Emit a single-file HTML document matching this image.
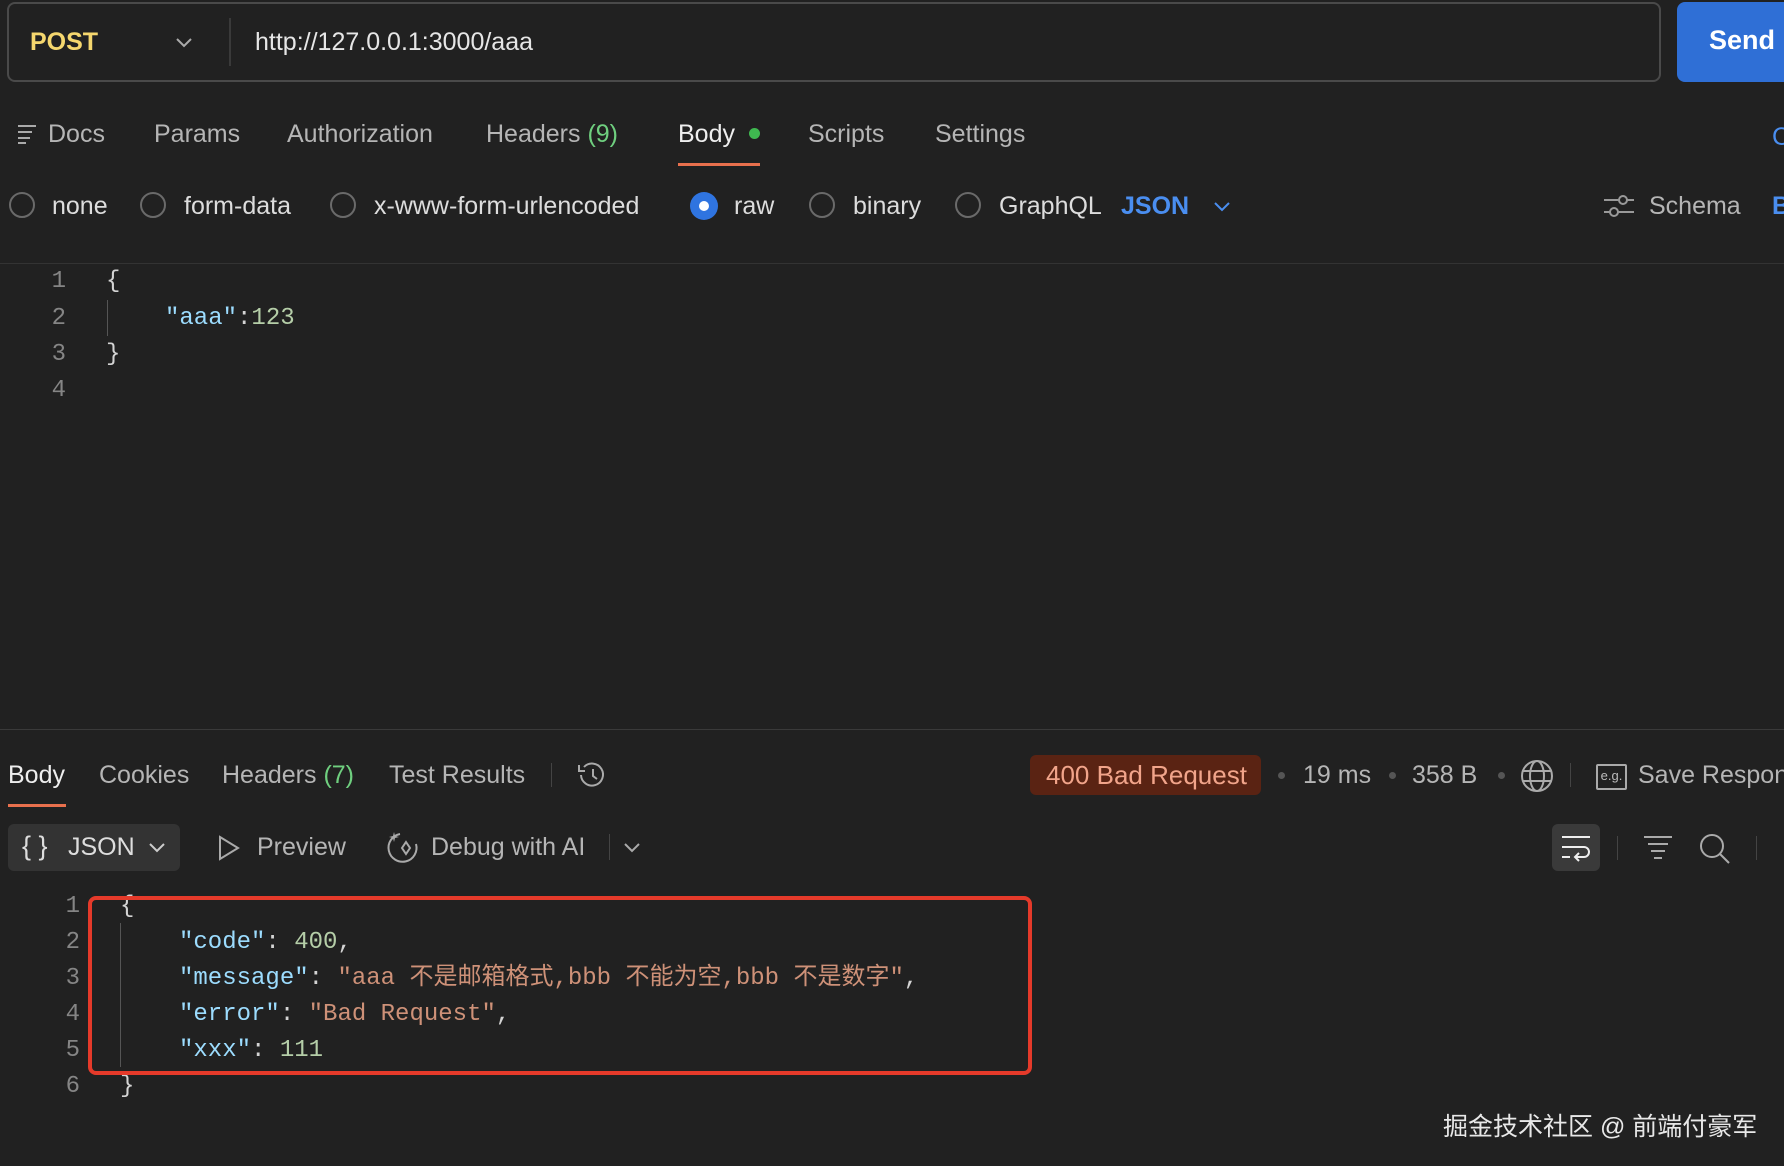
<!DOCTYPE html>
<html><head><meta charset="utf-8"><style>
*{margin:0;padding:0;box-sizing:border-box}
body{width:1784px;height:1166px;background:#212121;overflow:hidden;position:relative;font-family:"Liberation Sans","Noto Sans CJK SC",sans-serif;color:#b5b5b5}
.a{position:absolute;white-space:nowrap}
.t{font-size:25px;line-height:28px}
.m{font-family:"Liberation Mono","Noto Sans CJK SC",monospace;font-size:24px;line-height:28px}
.r{position:absolute;width:26px;height:26px;border:2px solid #6a6a6a;border-radius:50%}
.k{color:#9cdcfe}.s{color:#ce9178}.n{color:#b5cea8}.w{color:#d4d4d4}
.ln{color:#858585;text-align:right;width:30px}
</style></head><body>
<div class="a" style="left:7px;top:2px;width:1654px;height:80px;border:2px solid #4a4a4a;border-radius:8px"></div>
<div class="a t" style="left:30px;top:28px;color:#f5d76e;font-weight:bold">POST</div>
<svg class="a" style="left:174px;top:35px" width="20" height="14"><path d="M3 4l7 7 7-7" stroke="#aaa" stroke-width="2" fill="none"/></svg>
<div class="a" style="left:229px;top:18px;width:2px;height:48px;background:#3a3a3a"></div>
<div class="a t" style="left:255px;top:28px;color:#e6e6e6">http://127.0.0.1:3000/aaa</div>
<div class="a" style="left:1677px;top:2px;width:120px;height:80px;background:#2f6fd6;border-radius:8px"></div>
<div class="a" style="left:1709px;top:25px;font-size:27px;font-weight:bold;color:#fff">Send</div>

<svg class="a" style="left:17px;top:124px" width="22" height="20"><path d="M1 2h18M1 8h14M1 14h12M1 19h8" stroke="#aaa" stroke-width="2"/></svg>
<div class="a t" style="left:48px;top:120px">Docs</div>
<div class="a t" style="left:154px;top:120px">Params</div>
<div class="a t" style="left:287px;top:120px">Authorization</div>
<div class="a t" style="left:486px;top:120px">Headers <span style="color:#6fcf7f">(9)</span></div>
<div class="a t" style="left:678px;top:120px;color:#eee">Body</div>
<div class="a" style="left:749px;top:128px;width:11px;height:11px;border-radius:50%;background:#3fb950"></div>
<div class="a" style="left:678px;top:163px;width:82px;height:3px;background:#e8704d"></div>
<div class="a t" style="left:808px;top:120px">Scripts</div>
<div class="a t" style="left:935px;top:120px">Settings</div>
<div class="a t" style="left:1772px;top:123px;color:#4a8ef0">C</div>

<div class="r" style="left:9px;top:192px"></div><div class="a t" style="left:52px;top:192px;color:#ddd">none</div>
<div class="r" style="left:140px;top:192px"></div><div class="a t" style="left:184px;top:192px;color:#ddd">form-data</div>
<div class="r" style="left:330px;top:192px"></div><div class="a t" style="left:374px;top:192px;color:#ddd">x-www-form-urlencoded</div>
<div class="a" style="left:690px;top:192px;width:28px;height:28px;border-radius:50%;background:#2f74e0"></div>
<div class="a" style="left:699px;top:201px;width:10px;height:10px;border-radius:50%;background:#fff"></div>
<div class="a t" style="left:734px;top:192px;color:#ddd">raw</div>
<div class="r" style="left:809px;top:192px"></div><div class="a t" style="left:853px;top:192px;color:#ddd">binary</div>
<div class="r" style="left:955px;top:192px"></div><div class="a t" style="left:999px;top:192px;color:#ddd">GraphQL</div>
<div class="a t" style="left:1121px;top:192px;color:#4a8ef0;font-weight:bold">JSON</div>
<svg class="a" style="left:1212px;top:199px" width="20" height="14"><path d="M3 4l7 7 7-7" stroke="#4a8ef0" stroke-width="2" fill="none"/></svg>
<svg class="a" style="left:1603px;top:193px" width="32" height="26"><path d="M1 7h30M1 19h30" stroke="#999" stroke-width="2"/><circle cx="20" cy="7" r="4" fill="#212121" stroke="#999" stroke-width="2"/><circle cx="11" cy="19" r="4" fill="#212121" stroke="#999" stroke-width="2"/></svg>
<div class="a t" style="left:1649px;top:192px">Schema</div>
<div class="a t" style="left:1772px;top:192px;color:#4a8ef0;font-weight:bold">B</div>

<div class="a" style="left:0;top:263px;width:1784px;height:1px;background:#333"></div>
<div class="a m ln" style="left:36px;top:268px">1</div>
<div class="a m ln" style="left:36px;top:305px">2</div>
<div class="a m ln" style="left:36px;top:341px">3</div>
<div class="a m ln" style="left:36px;top:377px">4</div>
<div class="a m w" style="left:106px;top:268px">{</div>
<div class="a" style="left:107px;top:300px;width:1px;height:36px;background:#555"></div>
<div class="a m" style="left:165px;top:305px"><span class="k">"aaa"</span><span class="w">:</span><span class="n">123</span></div>
<div class="a m w" style="left:106px;top:341px">}</div>

<div class="a" style="left:0;top:729px;width:1784px;height:1px;background:#3a3a3a"></div>
<div class="a t" style="left:8px;top:761px;color:#eee">Body</div>
<div class="a" style="left:8px;top:804px;width:58px;height:3px;background:#e8704d"></div>
<div class="a t" style="left:99px;top:761px">Cookies</div>
<div class="a t" style="left:222px;top:761px">Headers <span style="color:#6fcf7f">(7)</span></div>
<div class="a t" style="left:389px;top:761px">Test Results</div>
<div class="a" style="left:551px;top:763px;width:1px;height:24px;background:#444"></div>
<svg class="a" style="left:576px;top:760px" width="32" height="30"><path d="M5 15a11 11 0 1 0 3-8" stroke="#aaa" stroke-width="2" fill="none"/><path d="M3 5v6h6" stroke="#aaa" stroke-width="2" fill="none"/><path d="M17 9v7l4 3" stroke="#aaa" stroke-width="2" fill="none"/></svg>
<div class="a" style="left:1030px;top:755px;width:231px;height:40px;background:#5a2313;border-radius:6px"></div>
<div class="a t" style="left:1046px;top:761px;color:#f1a48a;font-size:26px">400 Bad Request</div>
<div class="a" style="left:1278px;top:772px;width:7px;height:7px;border-radius:50%;background:#555"></div>
<div class="a t" style="left:1303px;top:761px">19 ms</div>
<div class="a" style="left:1389px;top:772px;width:7px;height:7px;border-radius:50%;background:#555"></div>
<div class="a t" style="left:1412px;top:761px">358 B</div>
<div class="a" style="left:1498px;top:772px;width:7px;height:7px;border-radius:50%;background:#555"></div>
<svg class="a" style="left:1520px;top:759px" width="34" height="34"><circle cx="17" cy="17" r="15" stroke="#aaa" stroke-width="2" fill="none"/><ellipse cx="17" cy="17" rx="7" ry="15" stroke="#aaa" stroke-width="2" fill="none"/><path d="M3 12h28M3 22h28" stroke="#aaa" stroke-width="2"/></svg>
<div class="a" style="left:1570px;top:763px;width:1px;height:24px;background:#444"></div>
<div class="a" style="left:1596px;top:764px;width:31px;height:26px;border:2px solid #aaa;border-radius:2px;font-size:13px;color:#bbb;text-align:center;line-height:20px">e.g.</div>
<div class="a t" style="left:1638px;top:761px">Save Respon</div>

<div class="a" style="left:8px;top:824px;width:172px;height:47px;background:#333;border-radius:6px"></div>
<div class="a t" style="left:22px;top:832px;color:#ddd;font-size:27px">{ }</div>
<div class="a t" style="left:68px;top:833px;color:#ddd">JSON</div>
<svg class="a" style="left:147px;top:840px" width="20" height="14"><path d="M3 4l7 7 7-7" stroke="#ccc" stroke-width="2" fill="none"/></svg>
<svg class="a" style="left:217px;top:835px" width="24" height="26"><path d="M3 2l18 11-18 11z" stroke="#aaa" stroke-width="2" fill="none"/></svg>
<div class="a t" style="left:257px;top:833px">Preview</div>
<svg class="a" style="left:386px;top:830px" width="34" height="34"><path d="M14 4a14 14 0 1 0 16 10" stroke="#aaa" stroke-width="2" fill="none"/><path d="M20 12l4 6-4 6-4-6z" stroke="#aaa" stroke-width="2" fill="none"/><path d="M8 2l1 4 4 1-4 1-1 4-1-4-4-1 4-1z" fill="#aaa"/></svg>
<div class="a t" style="left:431px;top:833px">Debug with AI</div>
<div class="a" style="left:609px;top:834px;width:1px;height:26px;background:#444"></div>
<svg class="a" style="left:622px;top:840px" width="20" height="14"><path d="M3 4l7 7 7-7" stroke="#aaa" stroke-width="2" fill="none"/></svg>

<div class="a" style="left:1552px;top:824px;width:48px;height:47px;background:#3a3a3a;border-radius:6px"></div>
<svg class="a" style="left:1561px;top:834px" width="30" height="28"><path d="M1 3h28M1 13h22a5 5 0 0 1 0 10h-8M1 23h8" stroke="#eee" stroke-width="2" fill="none"/><path d="M18 19l-4 4 4 4" stroke="#eee" stroke-width="2" fill="none"/></svg>
<div class="a" style="left:1617px;top:836px;width:1px;height:24px;background:#444"></div>
<svg class="a" style="left:1643px;top:834px" width="30" height="28"><path d="M1 3h28M5 10h20M8 17h14M11 24h8" stroke="#aaa" stroke-width="2"/></svg>
<svg class="a" style="left:1698px;top:832px" width="34" height="34"><circle cx="14" cy="14" r="11" stroke="#aaa" stroke-width="2" fill="none"/><path d="M22 22l9 9" stroke="#aaa" stroke-width="2"/></svg>
<div class="a" style="left:1756px;top:836px;width:1px;height:24px;background:#444"></div>

<div class="a m ln" style="left:50px;top:893px">1</div>
<div class="a m ln" style="left:50px;top:929px">2</div>
<div class="a m ln" style="left:50px;top:965px">3</div>
<div class="a m ln" style="left:50px;top:1001px">4</div>
<div class="a m ln" style="left:50px;top:1037px">5</div>
<div class="a m ln" style="left:50px;top:1073px">6</div>
<div class="a m w" style="left:120px;top:893px">{</div>
<div class="a" style="left:120px;top:923px;width:1px;height:144px;background:#555"></div>
<div class="a m" style="left:179px;top:929px"><span class="k">"code"</span><span class="w">: </span><span class="n">400</span><span class="w">,</span></div>
<div class="a m" style="left:179px;top:965px"><span class="k">"message"</span><span class="w">: </span><span class="s">"aaa 不是邮箱格式,bbb 不能为空,bbb 不是数字"</span><span class="w">,</span></div>
<div class="a m" style="left:179px;top:1001px"><span class="k">"error"</span><span class="w">: </span><span class="s">"Bad Request"</span><span class="w">,</span></div>
<div class="a m" style="left:179px;top:1037px"><span class="k">"xxx"</span><span class="w">: </span><span class="n">111</span></div>
<div class="a m w" style="left:120px;top:1073px">}</div>
<div class="a" style="left:88px;top:896px;width:944px;height:179px;border:4px solid #e53a2a;border-radius:8px"></div>

<div class="a" style="left:1443px;top:1107px;font-size:25px;color:#e8e8e8">掘金技术社区 @ 前端付豪军</div>
</body></html>
